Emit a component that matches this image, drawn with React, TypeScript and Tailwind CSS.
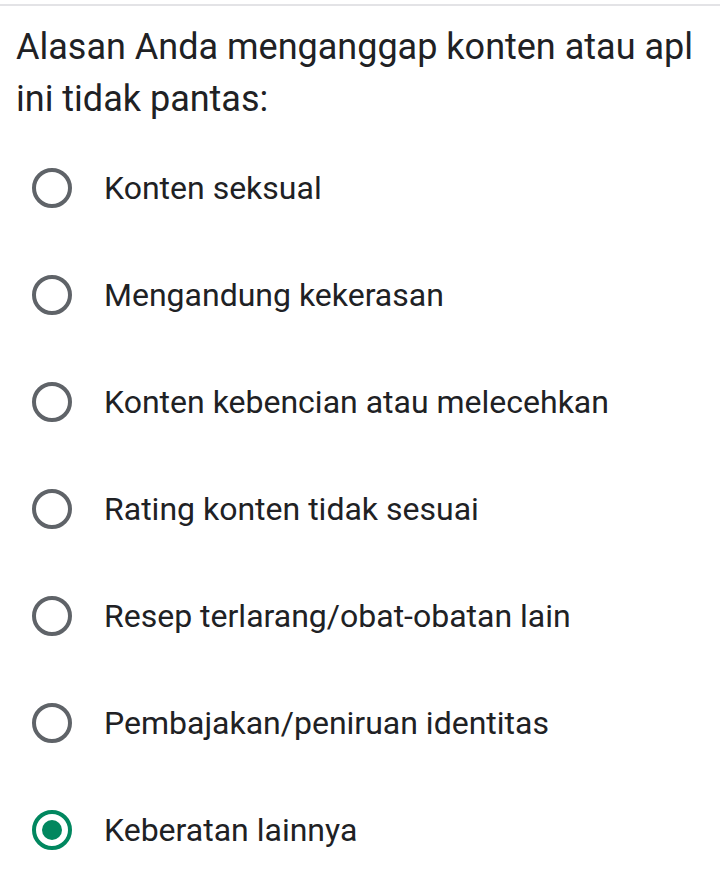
const options = [
  "Konten seksual",
  "Mengandung kekerasan",
  "Konten kebencian atau melecehkan",
  "Rating konten tidak sesuai",
  "Resep terlarang/obat-obatan lain",
  "Pembajakan/peniruan identitas",
  "Keberatan lainnya",
];

function Radio({ checked }: { checked: boolean }) {
  return (
    <span
      className={
        checked
          ? "flex h-10 w-10 shrink-0 items-center justify-center rounded-full border-4 border-[#01875f]"
          : "flex h-10 w-10 shrink-0 items-center justify-center rounded-full border-4 border-[#5f6368]"
      }
    >
      {checked && <span className="h-5 w-5 rounded-full bg-[#01875f]" />}
    </span>
  );
}

export default function App() {
  const selected = 6;
  return (
    <div className="min-h-[879px] bg-white font-['Roboto','Liberation_Sans',sans-serif] text-[#202124]">
      <div className="h-[4px]" />
      <div className="h-[2px] bg-[#e3e3e6]" />
      <h1 className="mt-[15px] px-4 text-[36px] leading-[52px] font-normal">
        Alasan Anda menganggap konten atau apl ini tidak pantas:
      </h1>
      <ul className="mt-[9px]">
        {options.map((label, i) => (
          <li key={label} className="flex h-[107px] items-center gap-8 pl-8">
            <Radio checked={i === selected} />
            <span className="text-[32px] leading-none text-[#202124]">{label}</span>
          </li>
        ))}
      </ul>
    </div>
  );
}
